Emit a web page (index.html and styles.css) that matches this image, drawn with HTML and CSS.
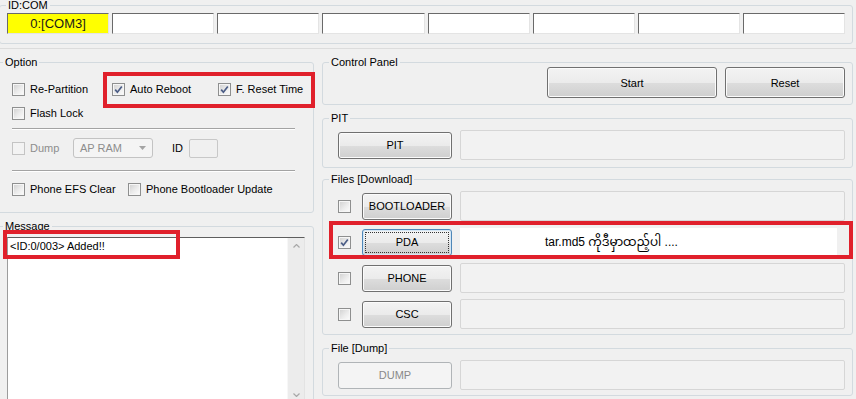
FILE: index.html
```html
<!DOCTYPE html>
<html>
<head>
<meta charset="utf-8">
<link rel="stylesheet" href="styles.css">
</head>
<body>
<fieldset class="grp idcom">
  <legend>ID:COM</legend>
  <div class="coms">
    <div class="com active">0:[COM3]</div>
    <div class="com"></div>
    <div class="com"></div>
    <div class="com"></div>
    <div class="com"></div>
    <div class="com"></div>
    <div class="com"></div>
    <div class="com"></div>
  </div>
</fieldset>

<div class="main">
  <div class="col-left">
    <fieldset class="grp option">
      <legend>Option</legend>
      <div class="opt-body">
        <div class="row">
          <label class="chk w100"><span class="cb"></span>Re-Partition</label>
          <div class="hl">
            <label class="chk w106"><span class="cb"><svg viewBox="0 0 11 11"><path d="M2.2 5.6 L4.4 8.2 L8.8 2.4"/></svg></span>Auto Reboot</label>
            <label class="chk w84"><span class="cb"><svg viewBox="0 0 11 11"><path d="M2.2 5.6 L4.4 8.2 L8.8 2.4"/></svg></span>F. Reset Time</label>
          </div>
        </div>
        <div class="row gap11">
          <label class="chk"><span class="cb"></span>Flash Lock</label>
        </div>
        <div class="sep sep1"></div>
        <div class="row dump-row">
          <label class="chk w61 off"><span class="cb"></span>Dump</label>
          <div class="combo"><span>AP RAM</span><svg class="caret" viewBox="0 0 7 4"><path d="M0 0 H7 L3.5 4 Z"/></svg></div>
          <span class="id-lbl">ID</span>
          <div class="idbox"></div>
        </div>
        <div class="sep sep2"></div>
        <div class="row gap11">
          <label class="chk w116"><span class="cb"></span>Phone EFS Clear</label>
          <label class="chk"><span class="cb"></span>Phone Bootloader Update</label>
        </div>
      </div>
    </fieldset>

    <fieldset class="grp message">
      <legend>Message</legend>
      <div class="msg-body">
        <div class="log">
          <div class="log-text">&lt;ID:0/003&gt; Added!!</div>
          <div class="vscroll">
            <svg class="arr" viewBox="0 0 7 4"><path d="M0.5 3.5 L3.5 0.5 L6.5 3.5"/></svg>
            <svg class="arr" viewBox="0 0 7 4"><path d="M0.5 0.5 L3.5 3.5 L6.5 0.5"/></svg>
          </div>
          <div class="mark mark-msg"></div>
        </div>
      </div>
    </fieldset>
  </div>

  <div class="col-right">
    <fieldset class="grp ctrl">
      <legend>Control Panel</legend>
      <div class="ctrl-body">
        <div class="btn w170">Start</div>
        <div class="btn w120">Reset</div>
      </div>
    </fieldset>

    <fieldset class="grp pit">
      <legend>PIT</legend>
      <div class="pit-body">
        <div class="frow">
          <div class="btn wide">PIT</div>
          <div class="fld"></div>
        </div>
      </div>
    </fieldset>

    <fieldset class="grp files">
      <legend>Files [Download]</legend>
      <div class="files-body">
        <div class="frow">
          <span class="cb"></span>
          <div class="btn narrow">BOOTLOADER</div>
          <div class="fld"></div>
        </div>
        <div class="frow pda">
          <span class="cb"><svg viewBox="0 0 11 11"><path d="M2.2 5.6 L4.4 8.2 L8.8 2.4"/></svg></span>
          <div class="btn narrow focus">PDA</div>
          <div class="fld note">tar.md5 ကိုဒီမှာထည့်ပါ ....</div>
          <div class="mark mark-pda"></div>
        </div>
        <div class="frow">
          <span class="cb"></span>
          <div class="btn narrow">PHONE</div>
          <div class="fld"></div>
        </div>
        <div class="frow">
          <span class="cb"></span>
          <div class="btn narrow">CSC</div>
          <div class="fld"></div>
        </div>
      </div>
    </fieldset>

    <fieldset class="grp dumpgrp">
      <legend>File [Dump]</legend>
      <div class="dump-body">
        <div class="frow">
          <div class="btn wide disabled">DUMP</div>
          <div class="fld"></div>
        </div>
      </div>
    </fieldset>
  </div>
</div>
</body>
</html>
```

FILE: styles.css
```css
* { box-sizing: border-box; }

html, body {
  margin: 0;
  padding: 0;
}

body {
  width: 856px;
  height: 399px;
  overflow: hidden;
  background: #f0f0f0;
  font-family: "Liberation Sans", Arial, sans-serif;
  font-size: 11px;
  color: #000;
}

/* group boxes */
.grp {
  margin: 0;
  padding: 0;
  min-width: 0;
  border: 1px solid #d3dadf;
  border-radius: 3px;
}

.grp > legend {
  padding: 0 2px;
  margin-left: 6px;
  line-height: 13px;
  font-size: 11px;
}

/* ID:COM */
.idcom {
  margin: -1px 3px 0 -1px;
}

.coms {
  display: flex;
  gap: 3px;
  padding: 1px 7px 9px 7px;
}

.com {
  flex: 1;
  height: 21px;
  background: #fff;
  border: 1px solid;
  border-color: #6a6a6a #e4e4e4 #e4e4e4 #6a6a6a;
  font-size: 13px;
  line-height: 19px;
  text-align: center;
  color: #1a1a1a;
}

.com.active {
  background: #ffff00;
}

/* main area */
.main {
  display: flex;
  gap: 8px;
  margin-top: 4px;
  border-top: 1px solid #dcdcdc;
  padding-top: 7px;
}

.col-left {
  width: 318px;
  flex: none;
  margin-left: -4px;
}

.col-right {
  flex: 1;
  margin-right: 3px;
}

/* option */
.opt-body {
  padding: 14px 0 16px 15px;
}

.row {
  display: flex;
  align-items: center;
  height: 13px;
}

.gap11 { margin-top: 11px; }

.chk {
  display: flex;
  align-items: center;
  gap: 5px;
  height: 13px;
  line-height: 13px;
  white-space: nowrap;
}

.chk.off { color: #8d8d8d; }

.w61 { width: 61px; }
.w84 { width: 84px; }
.w100 { width: 100px; }
.w106 { width: 106px; }
.w116 { width: 116px; }

.hl {
  display: flex;
  position: relative;
}

.hl::after {
  content: "";
  position: absolute;
  left: -9px;
  top: -11px;
  right: -13px;
  bottom: -12px;
  border: 4px solid #e0202b;
}

.cb {
  flex: none;
  width: 13px;
  height: 13px;
  border: 1px solid #8e8f8f;
  background: linear-gradient(135deg, #cfcfcf 0%, #ececec 55%, #fdfdfd 100%);
  box-shadow: inset 0 0 0 1px #f6f6f6;
  display: flex;
  align-items: center;
  justify-content: center;
}

.cb svg {
  width: 11px;
  height: 11px;
}

.cb svg path {
  fill: none;
  stroke: #4b5d86;
  stroke-width: 1.7;
}

.off .cb {
  border-color: #c4c4c4;
  background: #f3f3f3;
  box-shadow: none;
}

.sep {
  width: 283px;
  height: 2px;
  border-top: 1px solid #a3a3a3;
  border-bottom: 1px solid #fff;
}

.sep1 { margin-top: 8px; }
.sep2 { margin-top: 12px; }

.dump-row {
  height: 20px;
  margin-top: 8px;
}

.combo {
  width: 80px;
  height: 20px;
  border: 1px solid #c3c3c3;
  border-radius: 3px;
  background: #f4f4f4;
  color: #8d8d8d;
  display: flex;
  align-items: center;
  justify-content: space-between;
  padding: 0 6px;
  margin-right: 19px;
}

.caret {
  width: 7px;
  height: 4px;
}

.caret path { fill: #a4a4a4; }

.id-lbl {
  width: 17px;
}

.idbox {
  width: 29px;
  height: 19px;
  border: 1px solid #c8c8c8;
  border-radius: 2px;
  background: #f0f0f0;
}

/* message */
.message {
  margin-top: 7px;
}

.msg-body {
  padding: 4px 8px 0 10px;
}

.log {
  position: relative;
  display: flex;
  height: 166px;
  background: #fff;
  border-top: 1px solid #5e5e5e;
  border-left: 1px solid #9c9c9c;
  border-right: 1px solid #e3e3e3;
}

.log-text {
  flex: 1;
  padding: 2px 2px;
  line-height: 13px;
}

.vscroll {
  width: 17px;
  background: #ececec;
  border-left: 1px solid #f7f7f7;
  display: flex;
  flex-direction: column;
  justify-content: space-between;
  align-items: center;
  padding: 6px 0;
}

.arr {
  width: 7px;
  height: 4px;
}

.arr path {
  fill: none;
  stroke: #a8a8a8;
  stroke-width: 1.2;
}

.mark {
  position: absolute;
  border: 4px solid #e0202b;
  pointer-events: none;
}

.mark-msg {
  left: -5px;
  top: -8px;
  width: 177px;
  height: 29px;
}

/* right side */
.ctrl-body {
  display: flex;
  justify-content: flex-end;
  gap: 8px;
  margin-top: -2px;
  padding: 0 7px 6px 0;
}

.btn {
  height: 31px;
  border: 1px solid #707070;
  border-radius: 3px;
  background: linear-gradient(#f3f3f3 0%, #ebebeb 50%, #dddddd 51%, #cfcfcf 100%);
  box-shadow: inset 0 0 0 1px #fbfbfb;
  display: flex;
  align-items: center;
  justify-content: center;
  flex: none;
  font-size: 11px;
}

.w170 { width: 170px; }
.w120 { width: 120px; }

.pit {
  margin-top: 7px;
}

.pit-body {
  padding: 5px 7px 7px 15px;
}

.frow {
  display: flex;
  align-items: center;
  height: 30px;
  position: relative;
}

.frow .btn {
  height: 27px;
}

.btn.wide { width: 114px; margin-right: 8px; }
.btn.narrow { width: 90px; margin-right: 8px; }

.frow > .cb { margin-right: 11px; }

.fld {
  flex: 1;
  height: 30px;
  background: #f2f2f2;
  border: 1px solid #d6d6d6;
  border-radius: 2px;
}

.files {
  margin-top: 5px;
}

.files-body {
  padding: 5px 7px 5px 15px;
  display: flex;
  flex-direction: column;
  gap: 6px;
}

.btn.focus {
  border-color: #4f87b8;
  box-shadow: inset 0 0 0 1px #d3e6f5;
  outline: 1px dotted #333;
  outline-offset: -4px;
}

.fld.note {
  background: #fff;
  border: none;
  border-radius: 0;
  height: 28px;
  margin-right: 8px;
  padding-left: 85px;
  font-size: 12px;
  line-height: 28px;
  font-family: "Liberation Sans", "Noto Sans Myanmar", "Padauk", "Myanmar Text", Arial, sans-serif;
  white-space: nowrap;
}

.mark-pda {
  left: -9px;
  top: -6px;
  width: 524px;
  height: 38px;
}

.dumpgrp {
  margin-top: 7px;
}

.dump-body {
  padding: 5px 7px 5px 15px;
}

.btn.disabled {
  border-color: #b0b4b7;
  background: #f4f4f4;
  box-shadow: none;
  color: #8a8a8a;
}
```
